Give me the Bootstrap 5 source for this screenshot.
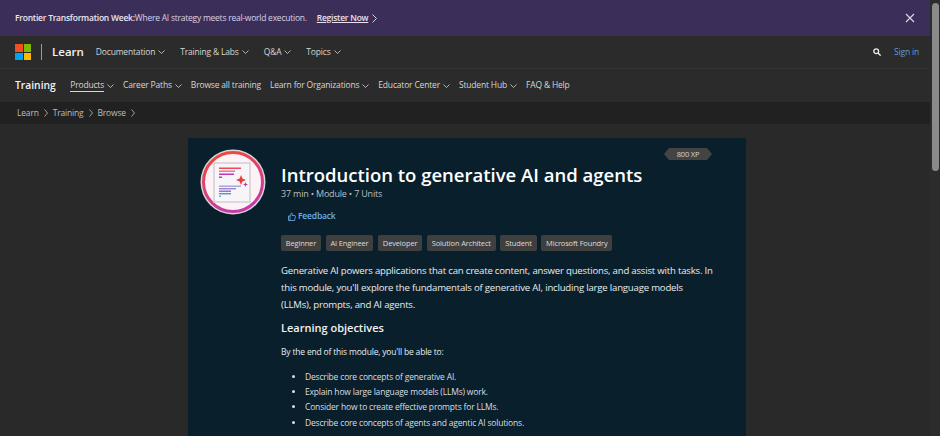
<!DOCTYPE html>
<html lang="en">

<head>
  <meta charset="UTF-8" />
  <meta name="viewport" content="width=device-width, initial-scale=1.0" />
  <link href="https://cdn.jsdelivr.net/npm/bootstrap@5.3.0/dist/css/bootstrap.min.css" rel="stylesheet" />
  <script src="https://cdn.jsdelivr.net/npm/bootstrap@5.3.0/dist/js/bootstrap.bundle.min.js"></script>
  <title>Introduction to generative AI and agents</title>
  <style>
    html, body { height: 436px; overflow: hidden; }
    body {
      background-color: #292929;
      color: #e6e6e6;
      font-family: "Open Sans", "Noto Sans", sans-serif;
      font-size: 8.5px;
      letter-spacing: -0.18px;
    }
    a { color: inherit; text-decoration: none; }
    .page-wrap { width: 930px; height: 436px; overflow: hidden; }
    .scroll-track { width: 10px; height: 436px; background: #2c2c2c; padding: 3px 1px 0 2px; }
    .scroll-thumb { height: 168px; background: #8a8a8a; border-radius: 4px; }

    .promo-bar { height: 36px; background: #3b2e58; padding: 0 15px 0 15px; color: #d9d2e6; letter-spacing: -0.24px; }
    .promo-bar strong { font-weight: 600; color: #ebe7f2; }
    .promo-link { color: #e6e0f2; font-weight: 600; text-decoration: underline; margin-left: 10px; }

    .site-head { height: 33px; background: #2b2b2b; border-bottom: 1px solid #333; padding: 0 11px 0 15px; }
    .ms-logo { width: 16px; height: 16px; display: grid; grid-template-columns: 1fr 1fr; gap: 1px; }
    .ms-logo span:nth-child(1) { background: #f25022; }
    .ms-logo span:nth-child(2) { background: #7fba00; }
    .ms-logo span:nth-child(3) { background: #00a4ef; }
    .ms-logo span:nth-child(4) { background: #ffb900; }
    .logo-sep { width: 1px; height: 16px; background: #9a9a9a; margin: 0 10px; }
    .brand-name { font-size: 11.5px; font-weight: 600; color: #f2f2f2; margin-right: 12px; letter-spacing: 0; }
    .head-link { color: #d6d6d6; margin-right: 15px; white-space: nowrap; }
    .head-link svg { margin-left: 3px; }
    .sign-in { color: #5b9bd5; margin-left: 13px; }

    .sub-head { height: 33px; background: #2b2b2b; padding: 0 15px; }
    .sub-title { font-size: 10.3px; font-weight: 600; color: #f2f2f2; margin-right: 14.5px; letter-spacing: 0; }
    .sub-link { color: #d6d6d6; margin-right: 9px; white-space: nowrap; }
    .sub-link svg { margin-left: 3px; }
    .sub-active { border-bottom: 1px solid #d6d6d6; line-height: 12px; }

    .crumbs { height: 22px; background: #212121; padding: 0 17px; color: #bdbdbd; }
    .crumbs svg { margin: 0 5px; }

    .module-panel { width: 558px; height: 298px; margin: 14px 0 0 188px; background: #091f2c; position: relative; padding: 11px 12px 0 12px; }
    .xp-tag { position: absolute; top: 10px; left: 476px; width: 48px; height: 12px; background: #444; color: #d6d6d6; font-size: 7.5px; line-height: 12px; text-align: center; clip-path: polygon(5px 0, calc(100% - 5px) 0, 100% 50%, calc(100% - 5px) 100%, 5px 100%, 0 50%); }
    .badge-art { width: 66px; height: 66px; flex: none; margin-right: 15px; }
    .module-title { font-size: 18.5px; font-weight: 600; color: #fff; margin: 14px 0 0 0; line-height: 24px; letter-spacing: 0; }
    .module-meta { color: #b8bfc4; margin-top: 1px; line-height: 12px; font-size: 9px; letter-spacing: -0.2px; }
    .feedback-link { color: #6cb0e8; font-weight: 600; margin: 10px 0 0 7px; line-height: 12px; }
    .feedback-link svg { margin-right: 2px; }
    .tag-row { margin-top: 13px; gap: 4.8px; }
    .topic-tag { background: #3f3f3f; color: #dcdcdc; font-size: 7.5px; line-height: 16px; padding: 0 4.8px; border-radius: 2px; white-space: nowrap; letter-spacing: -0.15px; }
    .module-copy { margin-left: 81px; width: 433px; color: #e8ecef; }
    .module-intro { font-size: 9.6px; line-height: 17px; margin: 11px 0 0 0; letter-spacing: -0.2px; }
    .module-sub { font-size: 11px; font-weight: 600; color: #f2f2f2; margin: 7px 0 0 0; line-height: 16px; letter-spacing: 0; }
    .module-lead { margin: 10px 0 0 0; line-height: 12px; }
    .module-goals { margin: 11px 0 0 0; padding-left: 24px; line-height: 15.2px; color: #d9dee2; }
  </style>
</head>

<body class="d-flex">
  <div class="page-wrap">
    <div class="promo-bar d-flex align-items-center">
      <strong>Frontier Transformation Week:</strong><span>Where AI strategy meets real-world execution.</span>
      <a href="#" class="promo-link">Register Now</a>
      <svg class="ms-1" width="5" height="9" viewBox="0 0 5 9" fill="none" stroke="#d9d2e6"><path d="M.5.5l4 4-4 4" /></svg>
      <a href="#" class="ms-auto" aria-label="Close">
        <svg class="d-block" width="10" height="10" viewBox="0 0 10 10" stroke="#e0d8ee" stroke-width="1.1"><path d="M1 1l8 8M9 1l-8 8" /></svg>
      </a>
    </div>

    <header class="site-head d-flex align-items-center">
      <div class="ms-logo"><span></span><span></span><span></span><span></span></div>
      <div class="logo-sep"></div>
      <a href="#" class="brand-name">Learn</a>
      <a href="#" class="head-link">Documentation<svg width="7" height="4" viewBox="0 0 7 4" fill="none" stroke="#d6d6d6" stroke-width=".8"><path d="M.5.5l3 3 3-3" /></svg></a>
      <a href="#" class="head-link">Training &amp; Labs<svg width="7" height="4" viewBox="0 0 7 4" fill="none" stroke="#d6d6d6" stroke-width=".8"><path d="M.5.5l3 3 3-3" /></svg></a>
      <a href="#" class="head-link">Q&amp;A<svg width="7" height="4" viewBox="0 0 7 4" fill="none" stroke="#d6d6d6" stroke-width=".8"><path d="M.5.5l3 3 3-3" /></svg></a>
      <a href="#" class="head-link">Topics<svg width="7" height="4" viewBox="0 0 7 4" fill="none" stroke="#d6d6d6" stroke-width=".8"><path d="M.5.5l3 3 3-3" /></svg></a>
      <svg class="ms-auto" width="8" height="8" viewBox="0 0 8 8" fill="none" stroke="#f0f0f0" stroke-width="1.3"><circle cx="3.2" cy="3.2" r="2.4" /><path d="M5 5l2.6 2.6" /></svg>
      <a href="#" class="sign-in">Sign in</a>
    </header>

    <nav class="sub-head d-flex align-items-center">
      <a href="#" class="sub-title">Training</a>
      <a href="#" class="sub-link"><span class="sub-active d-inline-block">Products</span><svg width="7" height="4" viewBox="0 0 7 4" fill="none" stroke="#d6d6d6" stroke-width=".8"><path d="M.5.5l3 3 3-3" /></svg></a>
      <a href="#" class="sub-link">Career Paths<svg width="7" height="4" viewBox="0 0 7 4" fill="none" stroke="#d6d6d6" stroke-width=".8"><path d="M.5.5l3 3 3-3" /></svg></a>
      <a href="#" class="sub-link">Browse all training</a>
      <a href="#" class="sub-link">Learn for Organizations<svg width="7" height="4" viewBox="0 0 7 4" fill="none" stroke="#d6d6d6" stroke-width=".8"><path d="M.5.5l3 3 3-3" /></svg></a>
      <a href="#" class="sub-link">Educator Center<svg width="7" height="4" viewBox="0 0 7 4" fill="none" stroke="#d6d6d6" stroke-width=".8"><path d="M.5.5l3 3 3-3" /></svg></a>
      <a href="#" class="sub-link">Student Hub<svg width="7" height="4" viewBox="0 0 7 4" fill="none" stroke="#d6d6d6" stroke-width=".8"><path d="M.5.5l3 3 3-3" /></svg></a>
      <a href="#" class="sub-link">FAQ &amp; Help</a>
    </nav>

    <div class="crumbs d-flex align-items-center">
      <a href="#">Learn</a><svg width="4" height="8" viewBox="0 0 4 8" fill="none" stroke="#bdbdbd" stroke-width=".8"><path d="M.5.5l3 3.5-3 3.5" /></svg>
      <a href="#">Training</a><svg width="4" height="8" viewBox="0 0 4 8" fill="none" stroke="#bdbdbd" stroke-width=".8"><path d="M.5.5l3 3.5-3 3.5" /></svg>
      <a href="#">Browse</a><svg width="4" height="8" viewBox="0 0 4 8" fill="none" stroke="#bdbdbd" stroke-width=".8"><path d="M.5.5l3 3.5-3 3.5" /></svg>
    </div>

    <main class="module-panel">
      <div class="xp-tag">800 XP</div>
      <div class="d-flex">
        <svg class="badge-art" viewBox="0 0 66 66">
          <defs>
            <linearGradient id="ringGrad" x1="0.3" y1="0" x2="0.7" y2="1">
              <stop offset="0" stop-color="#f0483e" />
              <stop offset="1" stop-color="#c239b3" />
            </linearGradient>
          </defs>
          <circle cx="33" cy="33" r="32.5" fill="#d8d8d8" />
          <circle cx="33" cy="33" r="29.5" fill="#fdf3f6" stroke="url(#ringGrad)" stroke-width="3" />
          <rect x="14" y="14" width="36" height="39" fill="#f7f5f7" stroke="#d2d0d2" stroke-width="1.5" />
          <rect x="19" y="18.5" width="22" height="1.5" fill="#f0485e" />
          <rect x="19" y="21.5" width="16" height="1.4" fill="#f0707e" />
          <rect x="19" y="24.5" width="15" height="1.5" fill="#c239b3" />
          <rect x="19" y="27.5" width="3" height="1.5" fill="#b03ac0" />
          <rect x="19" y="36.5" width="22" height="1.5" fill="#aaa8d8" />
          <rect x="19" y="39" width="17" height="1.4" fill="#9a86d2" />
          <rect x="19" y="41.5" width="12" height="1.5" fill="#8f78d0" />
          <rect x="19" y="44" width="12" height="1.4" fill="#5b8fd8" />
          <rect x="19" y="46.5" width="2" height="1.5" fill="#5bb0e8" />
          <path d="M41 26l1.4 3.6 3.6 1.4-3.6 1.4-1.4 3.6-1.4-3.6-3.6-1.4 3.6-1.4z" fill="#f03a3a" />
          <path d="M45.5 33l.7 1.8 1.8.7-1.8.7-.7 1.8-.7-1.8-1.8-.7 1.8-.7z" fill="#c239b3" />
        </svg>
        <div>
          <h1 class="module-title">Introduction to generative AI and agents</h1>
          <div class="module-meta">37 min • Module • 7 Units</div>
          <a href="#" class="feedback-link d-flex align-items-center">
            <svg width="8" height="9" viewBox="0 0 8 9" fill="none" stroke="#6cb0e8" stroke-width=".8"><path d="M.5 4h1.5v4.5H.5zM2 4l1.5-3c.8 0 1 .7.8 1.4L4 3.5h3l.5.6-.9 4.4H2" /></svg>Feedback
          </a>
          <div class="tag-row d-flex">
            <span class="topic-tag">Beginner</span>
            <span class="topic-tag">AI Engineer</span>
            <span class="topic-tag">Developer</span>
            <span class="topic-tag">Solution Architect</span>
            <span class="topic-tag">Student</span>
            <span class="topic-tag">Microsoft Foundry</span>
          </div>
        </div>
      </div>
      <div class="module-copy">
        <p class="module-intro">Generative AI powers applications that can create content, answer questions, and assist with tasks. In this module, you'll explore the fundamentals of generative AI, including large language models (LLMs), prompts, and AI agents.</p>
        <h2 class="module-sub">Learning objectives</h2>
        <p class="module-lead">By the end of this module, you'll be able to:</p>
        <ul class="module-goals">
          <li>Describe core concepts of generative AI.</li>
          <li>Explain how large language models (LLMs) work.</li>
          <li>Consider how to create effective prompts for LLMs.</li>
          <li>Describe core concepts of agents and agentic AI solutions.</li>
        </ul>
      </div>
    </main>
  </div>
  <div class="scroll-track">
    <div class="scroll-thumb"></div>
  </div>
</body>

</html>
